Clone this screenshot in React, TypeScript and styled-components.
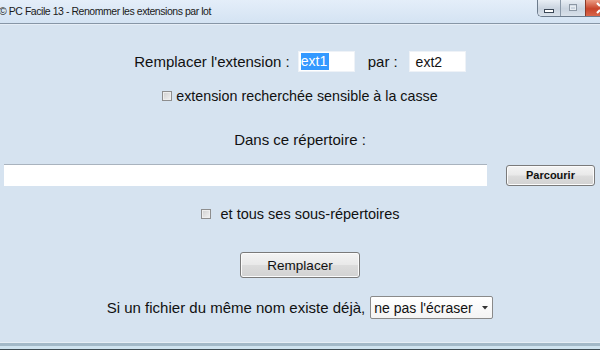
import React from 'react'
import styled, { createGlobalStyle } from 'styled-components'

const GlobalStyle = createGlobalStyle`
  html, body {
    margin: 0;
    padding: 0;
    overflow: hidden;
    background: #d6e3f0;
  }
  body {
    font-family: "Liberation Sans", Arial, sans-serif;
    color: #111;
  }
`

const Window = styled.div`
  width: 600px;
  height: 350px;
  display: flex;
  flex-direction: column;
  overflow: hidden;
  background: #d6e3f0;
`

const TitleBar = styled.div`
  height: 23px;
  flex-shrink: 0;
  display: grid;
  grid-template-columns: 1fr auto;
  align-items: start;
  background: linear-gradient(#e4eef9, #d4e3f3);
  border-bottom: 1px solid #8796a6;
`

const Title = styled.span`
  font-size: 10.5px;
  letter-spacing: -0.45px;
  line-height: 23px;
  margin-left: -1px;
  color: #1a1a1a;
  white-space: nowrap;
`

const Controls = styled.div`
  display: grid;
  grid-template-columns: 22px 25px 15px;
  height: 16px;
  border-left: 1px solid #6c7b8c;
  border-bottom: 1px solid #6c7b8c;
  border-radius: 0 0 0 5px;
  overflow: hidden;
`

const WinButton = styled.div`
  display: flex;
  align-items: center;
  justify-content: center;
  background: linear-gradient(#e8eef5, #c9d3df 55%, #d9e1ea);
  & + & {
    box-shadow: inset 1px 0 0 #8a98a8;
  }
`

const CloseButton = styled.div`
  display: flex;
  align-items: center;
  overflow: hidden;
  box-shadow: inset 1px 0 0 #8a3a28;
  background: linear-gradient(#eb9c84, #c8442a 55%, #d9664a);
`

const Content = styled.div`
  flex: 1;
  display: flex;
  flex-direction: column;
  align-items: center;
  padding-top: 26px;
  border-top: 1px solid #e6eef7;
`

const Row = styled.div<{ $mt: number; $gap?: number }>`
  display: flex;
  align-items: center;
  justify-content: center;
  margin-top: ${({ $mt }) => $mt}px;
  gap: ${({ $gap }) => $gap ?? 0}px;
`

const Label = styled.span<{ $size?: number }>`
  font-size: ${({ $size }) => $size ?? 15}px;
  line-height: 18px;
  white-space: nowrap;
`

const TextBox = styled.div<{ $w: number }>`
  width: ${({ $w }) => $w}px;
  height: 21px;
  box-sizing: border-box;
  background: #fff;
  border: 1px solid #eef2f7;
  padding: 1px 2px;
  display: flex;
  align-items: center;
  font-size: 14px;
`

const Selected = styled.span`
  background: #3399ff;
  color: #fff;
  line-height: 17px;
  padding-right: 2px;
`

const CheckBox = styled.span`
  width: 10px;
  height: 10px;
  box-sizing: border-box;
  border: 1px solid #8e8e8e;
  background: linear-gradient(135deg, #cfcfcf, #f3f3f3);
  box-shadow: inset 0 0 0 1px #eeeeee;
`

const PathRow = styled.div`
  align-self: stretch;
  display: flex;
  align-items: center;
  gap: 19px;
  margin-top: 15px;
  padding: 0 5px 0 4px;
`

const PathInput = styled.div`
  flex: 1;
  height: 22px;
  box-sizing: border-box;
  background: #fff;
  border-top: 1px solid #a9b3be;
`

const Button = styled.div<{ $w: number; $h: number; $bold?: boolean; $size: number }>`
  width: ${({ $w }) => $w}px;
  height: ${({ $h }) => $h}px;
  box-sizing: border-box;
  display: flex;
  align-items: center;
  justify-content: center;
  border: 1px solid #7a7a7a;
  border-radius: 3px;
  background: linear-gradient(#f4f4f4, #e9e9e9 48%, #dcdcdc 52%, #d2d2d2);
  box-shadow: inset 0 0 0 1px #fbfbfb;
  font-size: ${({ $size }) => $size}px;
  font-weight: ${({ $bold }) => ($bold ? 700 : 400)};
  color: #111;
`

const Select = styled.div`
  width: 123px;
  height: 23px;
  box-sizing: border-box;
  display: flex;
  align-items: center;
  justify-content: space-between;
  padding: 0 4px 0 3px;
  border: 1px solid #8a8a8a;
  border-radius: 2px;
  background: linear-gradient(#ffffff, #f4f4f4);
  font-size: 14px;
`

const Footer = styled.div`
  height: 6px;
  flex-shrink: 0;
  border-top: 1px solid #e6eef5;
  border-bottom: 1px solid #3e4b52;
  background: linear-gradient(#a3b9c8 0 3px, #cfe3ef 3px 6px);
`

export default function App() {
  return (
    <Window>
      <GlobalStyle />
      <TitleBar>
        <Title>© PC Facile 13 - Renommer les extensions par lot</Title>
        <Controls>
          <WinButton>
            <svg width="10" height="16" viewBox="0 0 10 16">
              <rect x="0.5" y="9.5" width="9" height="3" fill="#fff" stroke="#3b4756" />
            </svg>
          </WinButton>
          <WinButton>
            <svg width="10" height="10" viewBox="0 0 10 10">
              <rect x="1.5" y="1.5" width="7" height="6" fill="none" stroke="#8c97a4" />
              <rect x="2.5" y="3.5" width="5" height="3" fill="none" stroke="#e8edf2" />
            </svg>
          </WinButton>
          <CloseButton>
            <svg width="15" height="12" viewBox="0 0 15 12">
              <path d="M12 1 L15 4 M15 8 L12 11" stroke="#fff" strokeWidth="2.2" />
            </svg>
          </CloseButton>
        </Controls>
      </TitleBar>

      <Content>
        <Row $mt={0}>
          <Label>Remplacer l'extension :</Label>
          <TextBox $w={57} style={{ marginLeft: 8 }}>
            <Selected>ext1</Selected>
          </TextBox>
          <Label style={{ marginLeft: 13 }}>par :</Label>
          <TextBox $w={57} style={{ marginLeft: 11 }}>
            &nbsp;ext2
          </TextBox>
        </Row>

        <Row $mt={15} $gap={4}>
          <CheckBox />
          <Label $size={14.3}>extension recherchée sensible à la casse</Label>
        </Row>

        <Row $mt={26}>
          <Label>Dans ce répertoire :</Label>
        </Row>

        <PathRow>
          <PathInput />
          <Button $w={89} $h={21} $size={11} $bold>
            Parcourir
          </Button>
        </PathRow>

        <Row $mt={19} $gap={10}>
          <CheckBox />
          <Label $size={14.5}>et tous ses sous-répertoires</Label>
        </Row>

        <Row $mt={29}>
          <Button $w={120} $h={26} $size={13.5}>
            Remplacer
          </Button>
        </Row>

        <Row $mt={18} $gap={5}>
          <Label>Si un fichier du même nom existe déjà,</Label>
          <Select>
            <span>ne pas l'écraser</span>
            <svg width="6" height="4" viewBox="0 0 6 4">
              <path d="M0 0 H6 L3 3.5 Z" fill="#333" />
            </svg>
          </Select>
        </Row>
      </Content>
      <Footer />
    </Window>
  )
}
